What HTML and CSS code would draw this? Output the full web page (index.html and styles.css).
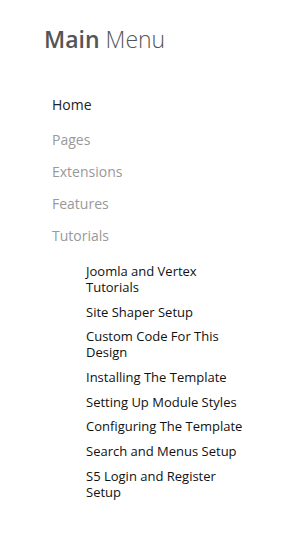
FILE: index.html
```html
<!DOCTYPE html>
<html lang="en">
  <head>
    <meta charset="UTF-8" />
    <title>Main Menu</title>
    <link rel="stylesheet" href="styles.css">
  </head>
  <body>
    <div class="module">
      <h3 class="module-title"><span class="bold">Main</span> Menu</h3>
      <ul class="menu">
        <li class="menu-item current"><a href="#">Home</a></li>
        <li class="menu-item"><a href="#">Pages</a></li>
        <li class="menu-item"><a href="#">Extensions</a></li>
        <li class="menu-item"><a href="#">Features</a></li>
        <li class="menu-item parent">
          <a href="#">Tutorials</a>
          <ul class="submenu">
            <li><a href="#">Joomla and Vertex Tutorials</a></li>
            <li><a href="#">Site Shaper Setup</a></li>
            <li><a href="#">Custom Code For This Design</a></li>
            <li><a href="#">Installing The Template</a></li>
            <li><a href="#">Setting Up Module Styles</a></li>
            <li><a href="#">Configuring The Template</a></li>
            <li><a href="#">Search and Menus Setup</a></li>
            <li><a href="#">S5 Login and Register Setup</a></li>
          </ul>
        </li>
      </ul>
    </div>
  </body>
</html>
```

FILE: styles.css
```css
* {
  margin: 0;
  padding: 0;
}

body {
  background: #fff;
  font-family: "Open Sans", sans-serif;
}

.module {
  padding: 23px 0 0 44px;
}

.module-title {
  font-size: 23px;
  line-height: 32px;
  font-weight: 300;
  color: #555;
}

.module-title .bold {
  font-weight: 600;
}

.menu {
  list-style: none;
  margin-top: 40px;
  padding-left: 8px;
}

.menu-item {
  font-size: 14px;
  line-height: 20px;
  margin-bottom: 12px;
}

.menu-item.current {
  margin-bottom: 15px;
}

.menu-item a {
  color: #999;
  text-decoration: none;
}

.menu-item.current a {
  color: #222;
}

.submenu {
  list-style: none;
  width: 160px;
  margin: 17px 0 0 34px;
}

.submenu li {
  font-size: 13px;
  line-height: 16px;
  margin-bottom: 8.7px;
}

.submenu li a {
  color: #111;
}
```
